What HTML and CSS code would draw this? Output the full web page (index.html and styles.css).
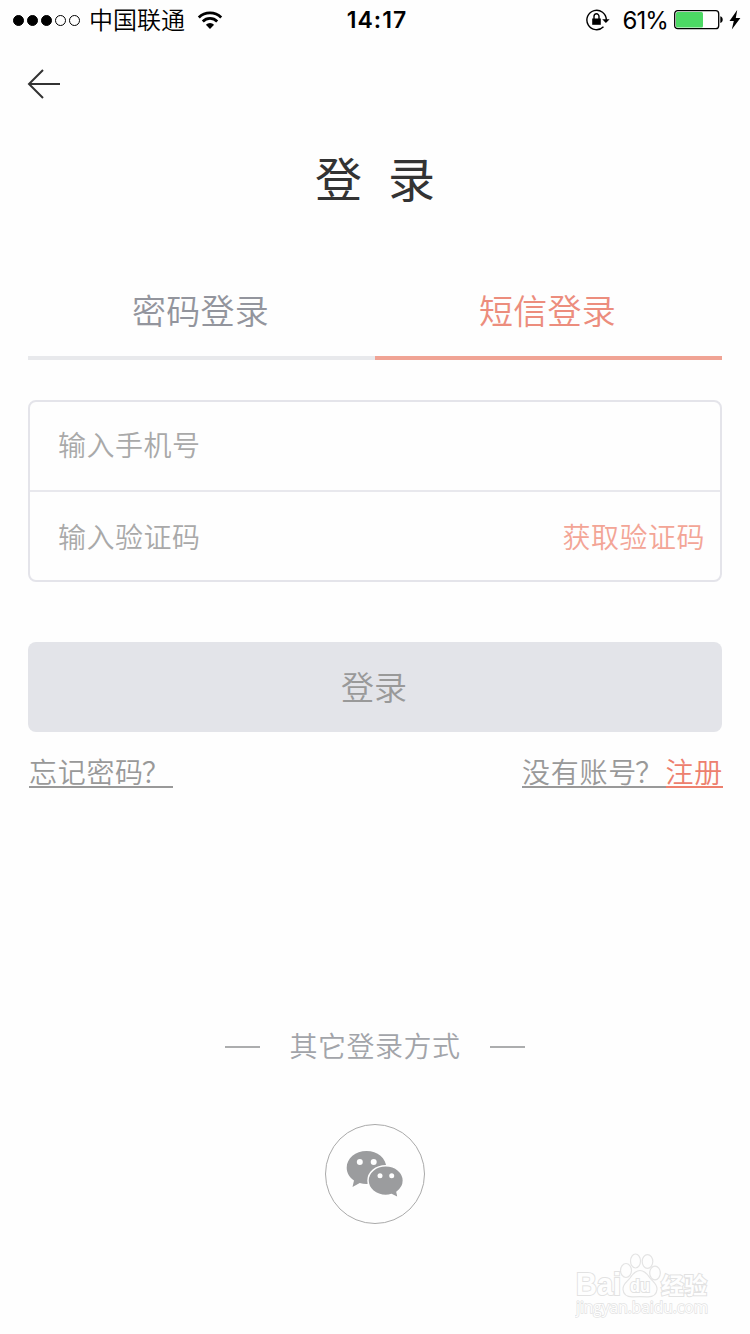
FILE: index.html
```html
<!DOCTYPE html>
<html lang="zh-CN">

<head>
    <title>登录</title>
    <meta charset="UTF-8" />
    <link rel="stylesheet" href="styles.css">
</head>

<body>
    <div class="status-bar">
        <div class="status-left">
            <div class="signal">
                <i class="on"></i><i class="on"></i><i class="on"></i><i></i><i></i>
            </div>
            <span class="carrier">中国联通</span>
            <svg class="wifi" width="26" height="20" viewBox="0 0 26 20">
                <path d="M1.8 7.4a16 16 0 0 1 22.4 0M5.8 11.4a10.3 10.3 0 0 1 14.4 0" fill="none" stroke="#000" stroke-width="2.8" />
                <path d="M8.9 14.7a5.8 5.8 0 0 1 8.2 0L13 19z" />
            </svg>
        </div>
        <span class="time">14:17</span>
        <div class="status-right">
            <svg class="lock" width="25" height="22" viewBox="0 0 25 22">
                <path d="M17.5 17.8A9.7 9.7 0 1 1 20.3 11" fill="none" stroke="#000" stroke-width="1.4" />
                <path d="M16.2 10.2h7.4L19.9 14z" />
                <path d="M6.2 9.5h8.6v6.3H6.2z" />
                <path d="M8 10V7.6a2.5 2.8 0 0 1 5 0V10" fill="none" stroke="#000" stroke-width="1.4" />
            </svg>
            <span class="percent">61%</span>
            <svg class="battery" width="50" height="20" viewBox="0 0 50 20">
                <rect x=".7" y=".7" width="44" height="18" rx="3" fill="none" stroke="#000" stroke-width="1.3" />
                <rect x="2" y="2" width="27" height="15.4" rx="1.5" fill="#4cd964" />
                <path d="M46.3 6.3c3.2.8 3.2 6 0 6.8z" />
            </svg>
            <svg class="bolt" width="12" height="20" viewBox="0 0 12 20">
                <path d="M8.2 0L.5 11h4.3L2.8 19.5 11.4 8H6.8z" />
            </svg>
        </div>
    </div>

    <header>
        <a class="back" href="#">
            <svg width="34" height="30" viewBox="0 0 34 30">
                <path d="M33 15H2M16 1L2 15l14 14" fill="none" stroke="#333" stroke-width="2" />
            </svg>
        </a>
        <h1>登<span>录</span></h1>
    </header>

    <div class="container">
        <nav class="tabs">
            <a href="#">密码登录</a>
            <a href="#" class="active">短信登录</a>
        </nav>

        <form>
            <div class="fields">
                <div class="field">
                    <input type="text" id="phone" name="phone" placeholder="输入手机号" />
                </div>
                <div class="field">
                    <input type="text" id="code" name="code" placeholder="输入验证码" />
                    <a class="get-code" href="#">获取验证码</a>
                </div>
            </div>
            <button type="button">登录</button>
        </form>

        <div class="links">
            <a href="#">忘记密码<span>？</span></a>
            <div class="no-account"><a href="#">没有账号<span>？</span></a><a class="register" href="#">注册</a></div>
        </div>
    </div>

    <div class="other">
        <div class="other-title">其它登录方式</div>
        <a class="wechat" href="#">
            <svg width="58" height="48" viewBox="0 0 58 48" fill="#9b9c9e">
                <path d="M20.5 1C9.5 1 .7 8.4.7 17.7c0 5.3 2.8 9.7 7.3 12.7L6.5 37l7.2-4c2.2.7 4.4 1 6.8 1 11 0 19.8-7.1 19.8-16.3C40.3 8.4 31.5 1 20.5 1z" />
                <path d="M39.7 15.8c-9.9 0-17.7 6.6-17.7 14.8s7.8 14.8 17.7 14.8c2.2 0 4-.3 5.8-.9l6.8 3.3-1.3-5.8c3.9-2.7 6.4-6.7 6.4-11.4 0-8.2-7.8-14.8-17.7-14.8z" stroke="#fefefe" stroke-width="1.5" />
                <g fill="#fefefe">
                    <circle cx="13.8" cy="12" r="3" />
                    <circle cx="27.7" cy="12" r="3" />
                    <circle cx="34" cy="25.8" r="2.5" />
                    <circle cx="45.7" cy="25.8" r="2.5" />
                </g>
            </svg>
        </a>
    </div>

    <svg class="watermark" width="140" height="68" viewBox="0 0 140 68">
        <g class="paw">
            <ellipse cx="51" cy="20.5" rx="5.5" ry="7" />
            <ellipse cx="60.5" cy="11" rx="5" ry="7" />
            <ellipse cx="72.5" cy="11.5" rx="5.3" ry="6.8" />
            <ellipse cx="80" cy="23" rx="5.3" ry="6.8" />
            <path d="M65 20.5c-5 0-7.500 4-10 7.500-3 4-7.500 6-7 11.500.5 6 5.500 7.500 10 7.300 5-.3 9-.3 14 0 4.500.2 9.500-1.300 10-7.300.5-5.500-4-7.500-7-11.500-2.500-3.500-5-7.500-10-7.500z" />
        </g>
        <g class="mark-text">
            <text class="mark-logo" x="1" y="45" textLength="45" lengthAdjust="spacingAndGlyphs">Bai</text>
            <text class="mark-du" x="55" y="42" textLength="20" lengthAdjust="spacingAndGlyphs">du</text>
            <text class="mark-cn" x="86" y="43.5" textLength="46" lengthAdjust="spacingAndGlyphs">经验</text>
            <text class="mark-url" x="1" y="63" textLength="132" lengthAdjust="spacingAndGlyphs">jingyan.baidu.com</text>
        </g>
    </svg>
</body>

</html>
```

FILE: styles.css
```css
* {
    box-sizing: border-box;
}

body {
    position: relative;
    height: 1334px;
    margin: 0;
    background-color: #fefefe;
    color: #333;
    font-family: Inter, "Noto Sans CJK SC", sans-serif;
    font-weight: 350;
    letter-spacing: 0.5px;
    overflow: hidden;
}

a {
    color: inherit;
    text-decoration: none;
}

svg {
    display: block;
}

.status-bar {
    display: grid;
    grid-template-columns: 1fr auto 1fr;
    align-items: center;
    height: 40px;
    padding: 0 9px 0 13px;
    color: #000;
    font-size: 24px;
    font-weight: 400;
    line-height: 39px;
    letter-spacing: 0;
}

.status-left,
.status-right {
    display: flex;
    align-items: center;
}

.status-right {
    justify-content: flex-end;
}

.signal {
    display: flex;
    gap: 3px;
}

.signal i {
    width: 11px;
    height: 11px;
    border: 1px solid #000;
    border-radius: 50%;
}

.signal .on {
    background-color: #000;
}

.carrier {
    margin-left: 9px;
    padding-top: 1px;
    font-weight: 350;
}

.wifi {
    margin-left: 12px;
}

.time {
    padding-top: 1px;
    font-size: 23px;
    font-weight: 600;
    letter-spacing: 1px;
}

.percent {
    margin: 0 6px 0 11px;
    padding-top: 1px;
    letter-spacing: -0.9px;
}

.bolt {
    margin-left: 5px;
}

header {
    height: 232px;
    padding: 29px 27px 0;
}

.back {
    display: block;
    width: 34px;
}

h1 {
    margin: 46px 0 0;
    font-size: 47px;
    font-weight: 400;
    line-height: 70px;
    letter-spacing: 0;
    text-align: center;
}

h1 span {
    margin-left: 26px;
}

.container {
    padding: 0 28px;
}

.tabs {
    display: flex;
    height: 88px;
}

.tabs a {
    flex: 1;
    padding-right: 2px;
    border-bottom: 4px solid #e8e9ec;
    color: #93959d;
    font-size: 34px;
    line-height: 80px;
    letter-spacing: 0.3px;
    text-align: center;
}

.tabs .active {
    border-color: #f0a394;
    color: #ec8d7d;
}

.fields {
    margin-top: 40px;
    border: 2px solid #e4e4ea;
    border-radius: 8px;
}

.field {
    display: flex;
    align-items: center;
    height: 88px;
    padding: 0 15px 0 28px;
}

.field + .field {
    height: 90px;
    border-top: 2px solid #e8e8ed;
}

.field + .field input {
    padding-top: 3px;
}

input {
    flex: 1;
    min-width: 0;
    padding: 0;
    border: none;
    outline: none;
    background: none;
    font: inherit;
    font-size: 28px;
    letter-spacing: 0.5px;
}

input::placeholder {
    color: #a9a9a9;
}

.get-code {
    color: #f3a596;
    font-size: 28px;
}

button {
    display: block;
    width: 100%;
    height: 90px;
    margin-top: 60px;
    padding: 0 2px 2px 0;
    border: none;
    border-radius: 8px;
    background-color: #e3e4e9;
    color: #999;
    font: inherit;
    font-size: 33px;
}

.links {
    display: flex;
    justify-content: space-between;
    margin-top: 20px;
    color: #999;
    font-size: 28px;
    line-height: 43px;
    letter-spacing: 0.7px;
}

.links a {
    display: inline-block;
    height: 36px;
    margin-left: 1px;
    border-bottom: 2px solid #999;
}

.links span {
    margin-left: -2px;
    margin-right: 2px;
}

.no-account {
    display: flex;
    margin-right: -1px;
}

.links .register {
    margin-left: 0;
    border-color: #ed806e;
    color: #ed806e;
}

.other {
    display: flex;
    flex-direction: column;
    align-items: center;
    margin-top: 238px;
    color: #a2a4a9;
    font-size: 28px;
    line-height: 42px;
}

.other-title {
    display: flex;
    align-items: center;
    gap: 29px;
}

.other-title::before,
.other-title::after {
    content: "";
    width: 35px;
    height: 2px;
    background-color: #acadae;
}

.wechat {
    display: flex;
    align-items: center;
    justify-content: center;
    width: 100px;
    height: 100px;
    margin-top: 56px;
    border: 1px solid #aaa;
    border-radius: 50%;
}

.watermark {
    position: absolute;
    top: 1250px;
    left: 575px;
}

.paw {
    fill: #fefefe;
    stroke: #e4e4e4;
    stroke-width: 1.2px;
}

.mark-text {
    fill: #fefefe;
    stroke: #e2e2e2;
    stroke-width: 2px;
    paint-order: stroke;
    letter-spacing: 0;
}

.mark-logo {
    font: 700 31px "Liberation Sans", sans-serif;
}

.mark-du {
    font: 700 18px "Liberation Sans", sans-serif;
}

.mark-cn {
    font: 700 23px "Noto Sans CJK SC", sans-serif;
}

.mark-url {
    font: 400 16px "Open Sans", sans-serif;
    stroke-width: 1.4px;
}
```
